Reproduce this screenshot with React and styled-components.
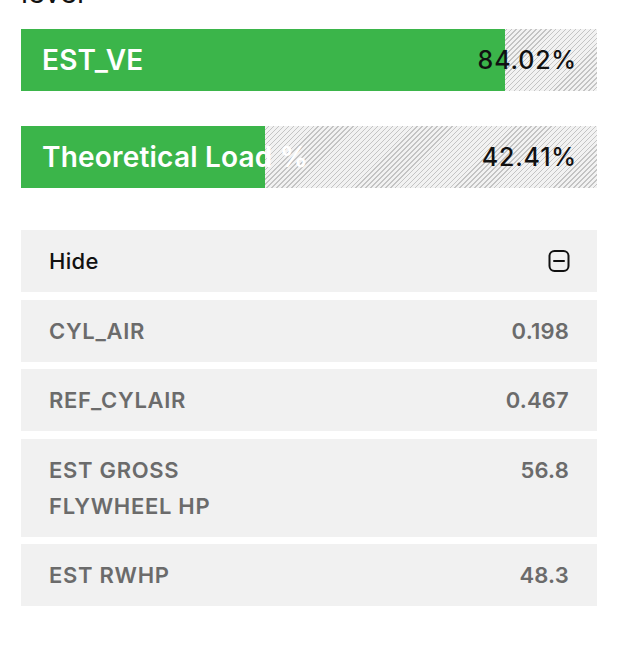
import React from "react";
import styled, { createGlobalStyle } from "styled-components";

const GlobalStyle = createGlobalStyle`
  html, body {
    margin: 0;
    padding: 0;
    background: #ffffff;
    overflow: hidden;
  }
  body {
    font-family: "Inter", "Noto Sans", sans-serif;
    -webkit-font-smoothing: antialiased;
  }
`;

const bars = [
  { label: "EST_VE", value: 84.02 },
  { label: "Theoretical Load %", value: 42.41 },
];

const stats = [
  { label: "CYL_AIR", value: "0.198" },
  { label: "REF_CYLAIR", value: "0.467" },
  { label: ["EST GROSS", "FLYWHEEL HP"], value: "56.8" },
  { label: "EST RWHP", value: "48.3" },
];

function MinusBox() {
  return (
    <svg width="22" height="22" viewBox="0 0 22 22" fill="none">
      <rect x="1.5" y="1" width="19" height="20" rx="5" stroke="#111" strokeWidth="2" />
      <line x1="6" y1="11" x2="16" y2="11" stroke="#111" strokeWidth="2" strokeLinecap="round" />
    </svg>
  );
}

export default function App() {
  return (
    <Page>
      <GlobalStyle />
      <Intro>level</Intro>

      <Bars>
        {bars.map((b) => (
          <Bar key={b.label}>
            <Fill style={{ width: `${b.value}%` }} />
            <BarLabel>{b.label}</BarLabel>
            <BarValue>{b.value.toFixed(2)}%</BarValue>
          </Bar>
        ))}
      </Bars>

      <List>
        <HeaderRow>
          <HeaderText>Hide</HeaderText>
          <MinusBox />
        </HeaderRow>
        {stats.map((s) => (
          <Row key={s.value}>
            <Label>
              {Array.isArray(s.label)
                ? s.label.map((l) => <div key={l}>{l}</div>)
                : s.label}
            </Label>
            <Value>{s.value}</Value>
          </Row>
        ))}
      </List>
    </Page>
  );
}

const Page = styled.div`
  padding: 0 21px;
  width: 576px;
`;

const Intro = styled.p`
  margin: -22px 0 21px;
  font-size: 29px;
  line-height: 30px;
  color: #111;
`;

const Bars = styled.div`
  display: flex;
  flex-direction: column;
  gap: 35px;
`;

const Bar = styled.div`
  position: relative;
  height: 62px;
  display: flex;
  align-items: center;
  justify-content: space-between;
  padding: 0 20px 0 21px;
  background-color: #f2f2f2;
  background-image: repeating-linear-gradient(
    135deg,
    #c4c4c4 0px,
    #c4c4c4 1px,
    #f2f2f2 1px,
    #f2f2f2 3.5px
  );
  overflow: hidden;
`;

const Fill = styled.div`
  position: absolute;
  left: 0;
  top: 0;
  bottom: 0;
  background: #3bb54a;
`;

const BarLabel = styled.span`
  position: relative;
  color: #ffffff;
  font-size: 28px;
  font-weight: 600;
  letter-spacing: 0.2px;
  white-space: nowrap;
`;

const BarValue = styled.span`
  position: relative;
  color: #111111;
  font-size: 25px;
  font-weight: 500;
  letter-spacing: 0.8px;
`;

const List = styled.div`
  margin-top: 42px;
  display: flex;
  flex-direction: column;
  gap: 7.6px;
`;

const HeaderRow = styled.div`
  display: flex;
  align-items: center;
  justify-content: space-between;
  height: 62px;
  padding: 0 27px 0 28px;
  background: #f1f1f1;
`;

const HeaderText = styled.span`
  font-size: 22px;
  font-weight: 500;
  letter-spacing: 0.3px;
  color: #111;
`;

const Row = styled.div`
  display: flex;
  align-items: flex-start;
  justify-content: space-between;
  padding: 13px 28px;
  background: #f1f1f1;
  font-size: 22px;
  line-height: 36px;
  font-weight: 600;
  letter-spacing: 0.7px;
  color: #6b6b6b;
`;

const Label = styled.div``;

const Value = styled.div`
  letter-spacing: 0.2px;
`;
